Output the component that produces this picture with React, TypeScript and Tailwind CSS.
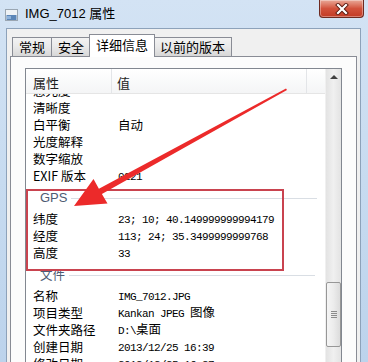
import React from "react";

const CJK = { fontFamily: '"Noto Sans CJK SC", "Noto Sans", sans-serif' };
const MONO = { fontFamily: '"Liberation Mono", "Noto Sans CJK SC", monospace' };

type Row =
  | { kind: "row"; name: string; value?: React.ReactNode }
  | { kind: "group"; name: string };

const Mono = ({ children }: { children: React.ReactNode }) => (
  <span className="text-[11px] tracking-[-0.6px]" style={MONO}>
    {children}
  </span>
);

const rows: Row[] = [
  { kind: "row", name: "感光度" },
  { kind: "row", name: "清晰度" },
  { kind: "row", name: "白平衡", value: <span>自动</span> },
  { kind: "row", name: "光度解释" },
  { kind: "row", name: "数字缩放" },
  { kind: "row", name: "EXIF 版本", value: <Mono>0221</Mono> },
  { kind: "group", name: "GPS" },
  { kind: "row", name: "纬度", value: <Mono>23; 10; 40.149999999994179</Mono> },
  { kind: "row", name: "经度", value: <Mono>113; 24; 35.3499999999768</Mono> },
  { kind: "row", name: "高度", value: <Mono>33</Mono> },
  { kind: "group", name: "文件" },
  { kind: "row", name: "名称", value: <Mono>IMG_7012.JPG</Mono> },
  {
    kind: "row",
    name: "项目类型",
    value: (
      <span>
        <Mono>Kankan JPEG </Mono>
        <span>图像</span>
      </span>
    ),
  },
  {
    kind: "row",
    name: "文件夹路径",
    value: (
      <span>
        <Mono>D:\</Mono>
        <span>桌面</span>
      </span>
    ),
  },
  { kind: "row", name: "创建日期", value: <Mono>2013/12/25 16:39</Mono> },
  { kind: "row", name: "修改日期", value: <Mono>2013/12/25 16:37</Mono> },
];

function Tab({ label, selected }: { label: string; selected?: boolean }) {
  if (selected) {
    return (
      <div className="relative z-10 -mx-[2px] mb-[-1px] flex h-[23px] w-[66px] items-center justify-center border border-b-0 border-[#898c95] bg-white pb-[2px] text-[13px] leading-[16px] text-black">
        {label}
      </div>
    );
  }
  return (
    <div className="flex h-[19px] items-center justify-center border border-b-0 border-[#898c95] bg-gradient-to-b from-[#f3f3f3] via-[#e9e9e9] to-[#d7d7d7] px-[6px] text-[13px] leading-[16px] text-black">
      {label}
    </div>
  );
}

export default function App() {
  return (
    <div
      className="relative h-[362px] w-[368px] overflow-hidden bg-[#c4d8ee]"
      style={CJK}
    >
      {/* window */}
      <div className="flex h-full flex-col bg-gradient-to-b from-[#d3e3f4] via-[#c7dbf0] to-[#bcd3ec]">
        {/* title bar */}
        <div className="flex h-[28px] shrink-0 items-start">
          <div className="mt-[9px] ml-[5px] h-[12px] w-[13px]">
            <svg width="13" height="12" viewBox="0 0 13 12">
              <rect x="0.5" y="0.5" width="12" height="11" fill="#eef2f6" stroke="#9aa6b2" />
              <rect x="1.5" y="6" width="10" height="5" fill="#5b86b8" />
              <rect x="2" y="7" width="4" height="3" fill="#8fb3dc" />
            </svg>
          </div>
          <div className="mt-[5px] ml-[7px] text-[13px] leading-[16px] text-black">
            <span style={{ fontFamily: '"Liberation Sans", sans-serif' }}>IMG_7012 </span>
            属性
          </div>
          <div className="mr-[4px] ml-auto flex h-[18px] w-[45px] items-center justify-center rounded-b-[4px] border border-t-0 border-[#6e2a20] bg-gradient-to-b from-[#e8a898] via-[#d2523c] to-[#c23a24] shadow-[inset_0_0_0_1px_rgba(255,255,255,0.35)]">
            <svg width="14" height="12" viewBox="0 0 14 12">
              <path d="M3 2 L11 10 M11 2 L3 10" stroke="#5a1a10" strokeWidth="4" strokeLinecap="square" />
              <path d="M3 2 L11 10 M11 2 L3 10" stroke="#ffffff" strokeWidth="2.2" strokeLinecap="square" />
            </svg>
          </div>
        </div>

        {/* body */}
        <div className="ml-[6px] mr-[7px] flex flex-1 flex-col border-t border-l border-r border-[#8da2ba] bg-[#f0f0f0]">
          {/* tabs */}
          <div className="flex h-[27px] shrink-0 items-end pl-[5px]">
            <Tab label="常规" />
            <div className="-ml-px">
              <Tab label="安全" />
            </div>
            <Tab label="详细信息" selected />
            <Tab label="以前的版本" />
          </div>
          {/* panel */}
          <div className="ml-[3px] mr-[3px] flex-1 border border-[#898c95] bg-[#fcfcfc] pt-[11px] pl-[14px]">
            {/* list view */}
            <div className="flex h-[320px] w-[317px] border border-[#828790] bg-white">
              <div className="flex w-[299px] flex-col">
                {/* header */}
                <div className="flex h-[25px] shrink-0 border-b border-[#e5e5e5] bg-gradient-to-b from-white to-[#f4f5f6] text-[13px] leading-[16px] text-[#1e1e1e]">
                  <div className="flex w-[86px] items-center border-r border-[#e3e5e8] pl-[7px] pt-[3px]">属性</div>
                  <div className="flex w-[195px] items-center border-r border-[#e3e5e8] pl-[5px] pt-[3px]">值</div>
                  <div className="flex-1" />
                </div>
                {/* rows */}
                <div className="flex-1 overflow-hidden">
                  <div className="mt-[-12px]">
                    {rows.map((r, i) =>
                      r.kind === "row" ? (
                        <div key={i} className="flex h-[17px] items-center text-[12.5px] leading-[15px] text-black">
                          <div className="w-[92px] shrink-0 pl-[7px] whitespace-nowrap">{r.name}</div>
                          <div className="whitespace-nowrap">{r.value}</div>
                        </div>
                      ) : (
                        <div key={i} className="flex h-[26px] items-start pt-[6px] pl-[14px]">
                          <span className="text-[12.5px] leading-[15px] text-[#4d5b73]" style={r.name === "GPS" ? { fontFamily: '"Liberation Sans", sans-serif', fontSize: 13 } : undefined}>
                            {r.name}
                          </span>
                          <div className="mt-[8px] ml-[4px] h-px w-[246px] bg-[#d9dee4]" />
                        </div>
                      )
                    )}
                  </div>
                </div>
              </div>
              {/* scrollbar */}
              <div className="flex w-[16px] flex-col items-center border-l border-[#f0f0f0] bg-gradient-to-r from-[#e3e3e3] via-[#f0f0f0] to-[#e3e3e3]">
                <div className="mt-[6px] h-0 w-0 border-r-[4px] border-b-[4px] border-l-[4px] border-r-transparent border-b-[#404040] border-l-transparent" />
                <div className="mt-[203px] flex h-[65px] w-[15px] flex-col items-center justify-center gap-[1px] rounded-[2px] border border-[#979797] bg-gradient-to-r from-[#f5f5f5] via-[#ececec] to-[#dcdcdc]">
                  <div className="h-px w-[6px] bg-[#8c8c8c]" />
                  <div className="h-px w-[6px] bg-[#8c8c8c]" />
                  <div className="h-px w-[6px] bg-[#8c8c8c]" />
                  <div className="h-px w-[6px] bg-[#8c8c8c]" />
                </div>
              </div>
            </div>
          </div>
        </div>
      </div>

      {/* annotation: red box */}
      <div className="pointer-events-none absolute top-[189px] left-[26px] h-[82px] w-[258px] border-2 border-[#c9434f]" />

      {/* annotation: red arrow */}
      <svg className="pointer-events-none absolute top-0 left-0" width="368" height="362" viewBox="0 0 368 362">
        <polygon
          points="286,88.5 287,90 101.9,193.9 107.5,203.5 74,206 93.5,179 98.9,188.7"
          fill="#ec2a2a"
        />
      </svg>
    </div>
  );
}
